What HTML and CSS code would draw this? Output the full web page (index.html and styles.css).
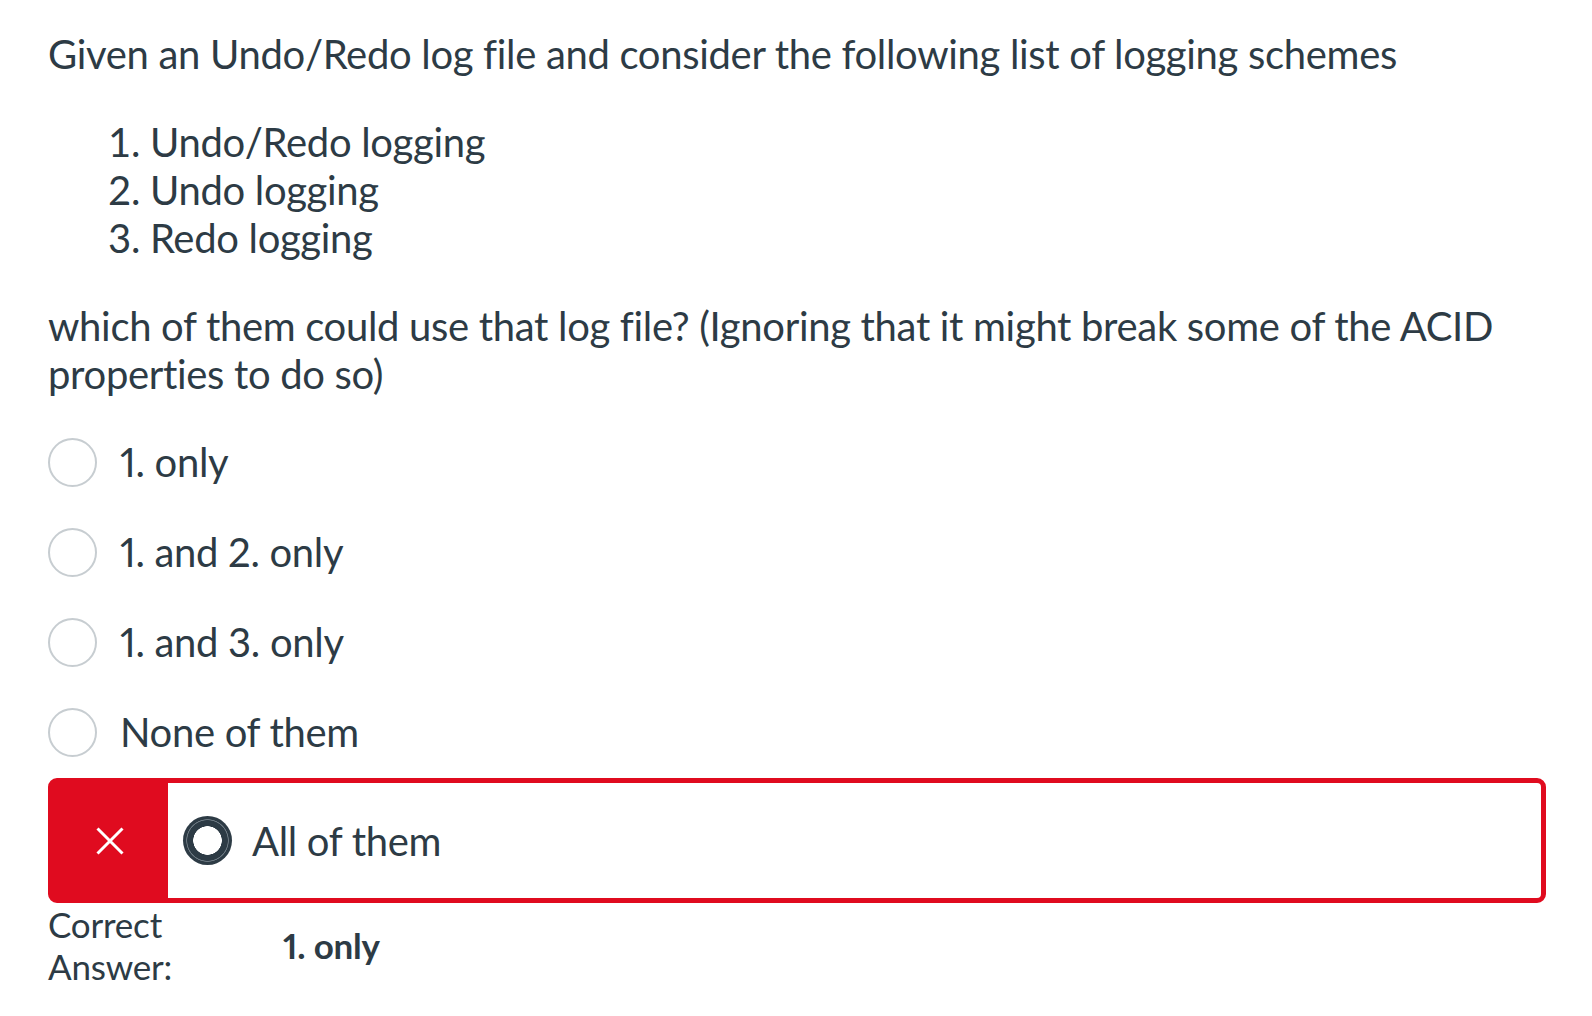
FILE: index.html
```html
<!DOCTYPE html>
<html lang="en">
<head>
<meta charset="utf-8">
<title>Quiz question</title>
<link rel="stylesheet" href="styles.css">
</head>
<body>
<div class="question">
  <p class="text">Given an Undo/Redo log file and consider the following list of logging schemes</p>
  <div class="schemes">
    <div>1. Undo/Redo logging</div>
    <div>2. Undo logging</div>
    <div>3. Redo logging</div>
  </div>
  <p class="text">which of them could use that log file? (Ignoring that it might break some of the ACID properties to do so)</p>

  <div class="answers">
    <div class="answer"><span class="radio"></span><span class="label">1. only</span></div>
    <div class="answer"><span class="radio"></span><span class="label">1. and 2. only</span></div>
    <div class="answer"><span class="radio"></span><span class="label">1. and 3. only</span></div>
    <div class="answer"><span class="radio"></span><span class="label">None of them</span></div>
    <div class="answer wrong">
      <div class="wrong-flag">
        <svg width="28" height="28" viewBox="0 0 28 28" aria-hidden="true">
          <path d="M1.5 1.5 L26.5 26.5 M26.5 1.5 L1.5 26.5" stroke="#fff" stroke-width="3" fill="none"/>
        </svg>
      </div>
      <span class="radio checked"></span><span class="label">All of them</span>
    </div>
  </div>

  <div class="correct">
    <div class="correct-label">Correct<br>Answer:</div>
    <div class="correct-value">1. only</div>
  </div>
</div>
</body>
</html>
```

FILE: styles.css
```css
html, body {
  margin: 0;
  padding: 0;
  background: #ffffff;
}

body {
  font-family: Lato, "Open Sans", "Liberation Sans", sans-serif;
  color: #2d3b45;
  font-size: 40px;
  line-height: 48px;
  letter-spacing: -0.32px;
  font-variant-numeric: proportional-nums;
}

.question {
  padding: 30px 46px 0 48px;
}

.text {
  margin: 0;
}

.schemes {
  margin: 40px 0 40px 0;
  padding-left: 60px;
  font-variant-numeric: tabular-nums;
}

.answers {
  margin-top: 19px;
  display: flex;
  flex-direction: column;
}

.answer {
  display: flex;
  align-items: center;
  height: 48px;
  padding: 21px 0;
}

.radio {
  box-sizing: border-box;
  width: 49px;
  height: 49px;
  border: 2px solid #c7cdd1;
  border-radius: 50%;
  flex: none;
  margin-right: 23px;
  background: #fff;
}

.radio.checked {
  border: none;
  background: radial-gradient(circle at center, #ffffff 0 14px, #2d3b45 14.5px 20px, #6b7780 20.5px 21px, #2d3b45 21.5px);
  margin-right: 20px;
}

.answer.wrong {
  box-sizing: border-box;
  height: 125px;
  padding: 0;
  margin-top: 1px;
  border: 5px solid #e00b1f;
  border-radius: 9px;
}

.wrong-flag {
  align-self: stretch;
  width: 115px;
  background: #e00b1f;
  display: flex;
  align-items: center;
  justify-content: center;
  margin-right: 15px;
  margin-left: -1px;
  padding-right: 1px;
}

.correct {
  display: flex;
  align-items: center;
  font-size: 35px;
  line-height: 42px;
  letter-spacing: -0.2px;
}

.correct-label {
  width: 235px;
  flex: none;
}

.correct-value {
  font-weight: 700;
}
```
